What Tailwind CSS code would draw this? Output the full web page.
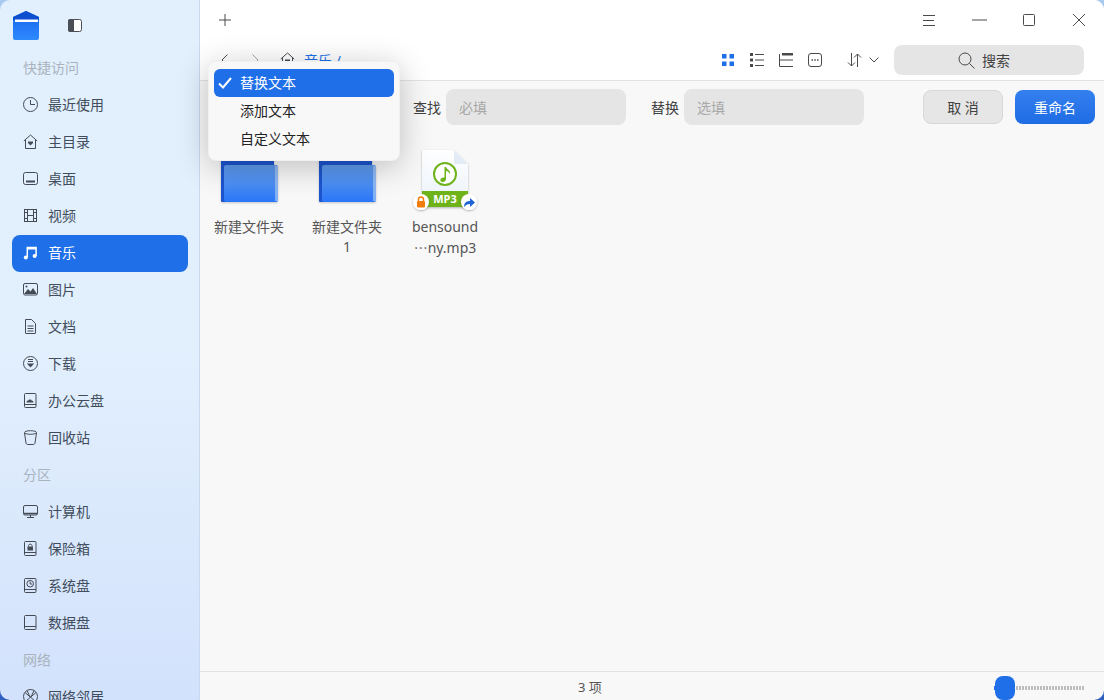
<!DOCTYPE html>
<html lang="zh-CN">
<head>
<meta charset="UTF-8">
<title>文件管理器</title>
<script src="https://cdn.jsdelivr.net/npm/@tailwindcss/browser@4"></script>
</head>
<body class="w-[1104px] h-[700px] overflow-hidden bg-gradient-to-b from-[#a9c9ef] to-[#2f5fc0] font-['Noto_Sans','Noto_Sans_CJK_SC',sans-serif] text-[14px]">
<div class="relative flex w-[1104px] h-[700px] overflow-hidden rounded-[10px]">

  <!-- sidebar -->
  <aside class="w-[200px] h-[700px] shrink-0 overflow-hidden border-r border-[#c9d9ee] bg-gradient-to-b from-[#e2f0fd] via-[#e2effd] to-[#d3e2fc] text-[#414d5c] flex flex-col">
    <div class="h-[50px] shrink-0 flex items-start pl-[12px] pt-[10px]">
      <svg width="28" height="30" viewBox="0 0 28 30">
        <defs><linearGradient id="lg" x1="0" y1="0" x2="0" y2="1"><stop offset="0" stop-color="#1463ea"/><stop offset="1" stop-color="#2f8aff"/></linearGradient></defs>
        <path d="M1 7 14 1l13 6v21a2 2 0 0 1-2 2H3a2 2 0 0 1-2-2z" fill="url(#lg)"/>
        <path d="M1 7 14 1l13 6v3H1z" fill="#0d4fcf"/>
        <path d="M3 9.500h23v2.500H3z" fill="#fff"/>
      </svg>
      <svg class="ml-[28px] mt-[9px]" width="14" height="13" viewBox="0 0 14 13"><rect x=".5" y=".5" width="13" height="12" rx="2" fill="#fff" stroke="#4a4f57"/><path d="M2 0h4v13H2a2 2 0 0 1-2-2V2a2 2 0 0 1 2-2z" fill="#4a4f57"/></svg>
    </div>
    <div class="h-[37px] shrink-0 flex items-center pb-[2px] pl-[23px] text-[#a9b3bd]">快捷访问</div>
    <div class="h-[37px] shrink-0 flex items-center pb-[2px] pl-[23px] gap-[10px]">
      <svg width="15" height="15" viewBox="0 0 15 15" fill="none" stroke="#454b54"><circle cx="7.500" cy="7.500" r="7"/><path d="M7.500 3v4.500H12"/></svg>最近使用</div>
    <div class="h-[37px] shrink-0 flex items-center pb-[2px] pl-[23px] gap-[10px]">
      <svg width="15" height="15" viewBox="0 0 15 15" fill="none" stroke="#454b54"><path d="M.8 7 7.500 1l6.700 6M2.500 6v8.500h10V6"/><path d="M5 7.500h5v1.500l-2.500 2.500L5 9z" fill="#454b54" stroke="none"/></svg>主目录</div>
    <div class="h-[37px] shrink-0 flex items-center pb-[2px] pl-[23px] gap-[10px]">
      <svg width="15" height="15" viewBox="0 0 15 15" fill="none" stroke="#454b54"><rect x=".5" y="1.500" width="14" height="12" rx="2"/><path d="M3 10.500h9" stroke-width="2"/></svg>桌面</div>
    <div class="h-[37px] shrink-0 flex items-center pb-[2px] pl-[23px] gap-[10px]">
      <svg width="15" height="15" viewBox="0 0 15 15" fill="none" stroke="#454b54"><rect x="1.500" y="1.500" width="12" height="12"/><path d="M4.500 1.500v12M10.500 1.500v12M4.500 7.500h6M1.500 4.500h3M1.500 10.500h3M10.500 4.500h3M10.500 10.500h3"/></svg>视频</div>
    <div class="h-[37px] shrink-0 ml-[12px] mr-[11px] rounded-[8px] bg-[#1f6fe8] text-white flex items-center pb-[2px] pl-[11px] gap-[10px]">
      <svg width="15" height="15" viewBox="0 0 15 15" fill="none" stroke="#fff" stroke-width="1.500"><path d="M4.300 12.500V2.500h8.800v8.500"/><path d="M4.300 2h8.800v2.500H4.300z" fill="#fff" stroke="none"/><circle cx="2.800" cy="12.500" r="2" fill="#fff" stroke="none"/><circle cx="11.600" cy="11" r="2" fill="#fff" stroke="none"/></svg>音乐</div>
    <div class="h-[37px] shrink-0 flex items-center pb-[2px] pl-[23px] gap-[10px]">
      <svg width="15" height="15" viewBox="0 0 15 15" fill="none" stroke="#454b54"><rect x=".5" y="1.500" width="14" height="11.500" rx="1.500"/><path d="m1 12 4-5 2.500 2.500L10 6l4 6z" fill="#454b54" stroke="none"/><circle cx="3.500" cy="4.500" r="1" fill="#454b54" stroke="none"/></svg>图片</div>
    <div class="h-[37px] shrink-0 flex items-center pb-[2px] pl-[23px] gap-[10px]">
      <svg width="15" height="15" viewBox="0 0 15 15" fill="none" stroke="#454b54"><path d="M2.500.5h6l4 4v9.500a.5.5 0 0 1-.5.500H3a.5.5 0 0 1-.5-.5z"/><path d="M4.500 7h6M4.500 9.500h6M4.500 12h6"/></svg>文档</div>
    <div class="h-[37px] shrink-0 flex items-center pb-[2px] pl-[23px] gap-[10px]">
      <svg width="15" height="15" viewBox="0 0 15 15" fill="none" stroke="#454b54"><circle cx="7.500" cy="7.500" r="7"/><path d="M5 3.500h5M5 5.500h5"/><path d="M3.800 7.500h7.400l-3.700 4z" fill="#454b54" stroke="none"/></svg>下载</div>
    <div class="h-[37px] shrink-0 flex items-center pb-[2px] pl-[23px] gap-[10px]">
      <svg width="15" height="15" viewBox="0 0 15 15" fill="none" stroke="#454b54"><rect x="1.500" y=".5" width="11.500" height="14" rx="1"/><path d="M1.500 11.500h11.500"/><path d="M3.500 9.500c0-1.500 1-2 1.800-2 .4-1.500 3-1.500 3.400 0 1 0 1.800.7 1.800 2z" fill="#454b54" stroke="none"/></svg>办公云盘</div>
    <div class="h-[37px] shrink-0 flex items-center pb-[2px] pl-[23px] gap-[10px]">
      <svg width="15" height="15" viewBox="0 0 15 15" fill="none" stroke="#454b54"><ellipse cx="7.500" cy="2.500" rx="6" ry="1.800"/><path d="m1.500 3 1.500 10c.2 1 1 1.500 2 1.500h5c1 0 1.800-.5 2-1.500l1.500-10"/></svg>回收站</div>
    <div class="h-[37px] shrink-0 flex items-center pb-[2px] pl-[23px] text-[#a9b3bd]">分区</div>
    <div class="h-[37px] shrink-0 flex items-center pb-[2px] pl-[23px] gap-[10px]">
      <svg width="15" height="15" viewBox="0 0 15 15" fill="none" stroke="#454b54"><rect x=".5" y="1.500" width="14" height="9.500" rx="1.500"/><path d="M.5 9.500h14" stroke-width="1.500"/><path d="M7.500 11v2.500M4 13.500h7"/></svg>计算机</div>
    <div class="h-[37px] shrink-0 flex items-center pb-[2px] pl-[23px] gap-[10px]">
      <svg width="15" height="15" viewBox="0 0 15 15" fill="none" stroke="#454b54"><rect x="1.500" y=".5" width="11.500" height="14" rx="1"/><path d="M1.500 11.500h11.500"/><rect x="4.500" y="5.500" width="5.500" height="4" fill="#454b54" stroke="none"/><path d="M5.500 5.500V4.500a1.800 1.800 0 0 1 3.500 0v1"/></svg>保险箱</div>
    <div class="h-[37px] shrink-0 flex items-center pb-[2px] pl-[23px] gap-[10px]">
      <svg width="15" height="15" viewBox="0 0 15 15" fill="none" stroke="#454b54"><rect x="1.500" y=".5" width="11.500" height="14" rx="1"/><path d="M1.500 11.500h11.500"/><circle cx="7.200" cy="5.700" r="3.300"/><path d="M7.200 3.500v2.500h2" /></svg>系统盘</div>
    <div class="h-[37px] shrink-0 flex items-center pb-[2px] pl-[23px] gap-[10px]">
      <svg width="15" height="15" viewBox="0 0 15 15" fill="none" stroke="#454b54"><rect x="1.500" y=".5" width="11.500" height="14" rx="1"/><path d="M1.500 11.500h11.500"/></svg>数据盘</div>
    <div class="h-[37px] shrink-0 flex items-center pb-[2px] pl-[23px] text-[#a9b3bd]">网络</div>
    <div class="h-[37px] shrink-0 flex items-center pb-[2px] pl-[23px] gap-[10px]">
      <svg width="15" height="15" viewBox="0 0 15 15" fill="none" stroke="#454b54"><circle cx="7.500" cy="7.500" r="7"/><path d="M2 3.500 12 12M13 3.500 3 12M4 1.500 7 8M11 1.500 8 8"/></svg>网络邻居</div>
  </aside>

  <!-- main -->
  <main class="flex-1 flex flex-col bg-[#f8f8f8] text-[#414141]">
    <header class="h-[81px] shrink-0 bg-white border-b border-[#e3e3e3] flex flex-col">
      <div class="h-[40px] flex items-center">
        <svg class="ml-[19px]" width="12" height="12" viewBox="0 0 12 12" stroke="#4a4a4a"><path d="M6 0v12M0 6h12"/></svg>
        <div class="ml-auto flex items-center">
          <svg width="12" height="11" viewBox="0 0 12 11" stroke="#4a4a4a"><path d="M0 .5h12M0 5.500h11M0 10.500h12"/></svg>
          <svg class="ml-[37px]" width="15" height="2" viewBox="0 0 15 2" stroke="#4a4a4a"><path d="M0 1h15"/></svg>
          <svg class="ml-[36px]" width="12" height="12" viewBox="0 0 12 12" fill="none" stroke="#4a4a4a"><rect x=".5" y=".5" width="11" height="11" rx="1"/></svg>
          <svg class="ml-[38px] mr-[19px]" width="12" height="12" viewBox="0 0 12 12" stroke="#4a4a4a"><path d="m0 0 12 12M12 0 0 12"/></svg>
        </div>
      </div>
      <div class="h-[40px] flex items-center">
        <svg class="ml-[21px]" width="8" height="12" viewBox="0 0 8 12" fill="none" stroke="#4a4a4a"><path d="M6.500.5 1 6l5.500 5.500"/></svg>
        <svg class="ml-[22px]" width="8" height="12" viewBox="0 0 8 12" fill="none" stroke="#a8a8a8"><path d="M1.500.5 7 6l-5.500 5.500"/></svg>
        <svg class="ml-[21px] -mt-[2px]" width="15" height="15" viewBox="0 0 15 15" fill="none" stroke="#454b54"><path d="M.8 7 7.500 1l6.700 6M2.500 6v8.500h10V6"/><path d="M5 7.500h5v1.500l-2.500 2.500L5 9z" fill="#454b54" stroke="none"/></svg>
        <span class="ml-[9px] text-[#1f6fe8]">音乐 /</span>
        <div class="ml-auto flex items-center">
          <svg width="12" height="12" viewBox="0 0 12 12" fill="#1f6fe8"><rect width="4.500" height="4.500"/><rect x="7.500" width="4.500" height="4.500"/><rect y="7.500" width="4.500" height="4.500"/><rect x="7.500" y="7.500" width="4.500" height="4.500"/></svg>
          <svg class="ml-[16px]" width="14" height="14" viewBox="0 0 14 14" fill="#4a4a4a"><rect width="3" height="3"/><rect y="5.500" width="3" height="3"/><rect y="11" width="3" height="3"/><path d="M5 1h9v1H5zM5 6.500h9v1H5zM5 12h9v1H5z"/></svg>
          <svg class="ml-[15px]" width="14" height="14" viewBox="0 0 14 14" fill="none" stroke="#4a4a4a"><path d="M.5 1v12.500H14M.5 7H14"/><path d="M3 0h11v2.500H3z" fill="#4a4a4a" stroke="none"/></svg>
          <svg class="ml-[15px]" width="14" height="14" viewBox="0 0 14 14" fill="none" stroke="#4a4a4a"><rect x=".5" y=".5" width="13" height="13" rx="2.500"/><path d="M3.500 7h1.500M6.300 7h1.500M9 7h1.500" stroke-width="1.500"/></svg>
          <svg class="ml-[25px]" width="15" height="14" viewBox="0 0 15 14" fill="none" stroke="#4a4a4a"><path d="M4.500 0v13M1 9.500 4.500 13 8 9.500M10.500 14V1M7 4.500 10.500 1 14 4.500"/></svg>
          <svg class="ml-[7px]" width="10" height="6" viewBox="0 0 10 6" fill="none" stroke="#4a4a4a"><path d="m.5.5 4.500 4.500L9.500.5"/></svg>
          <div class="ml-[15px] mr-[20px] w-[190px] h-[30px] rounded-[8px] bg-[#e5e5e5] flex items-center pl-[64px] gap-[7px] text-[#414141]">
            <svg width="17" height="17" viewBox="0 0 17 17" fill="none" stroke="#4a4a4a"><circle cx="7" cy="7" r="6"/><path d="m11.500 11.500 5 5"/></svg>搜索</div>
        </div>
      </div>
    </header>

    <div class="h-[52px] shrink-0 flex items-center">
      <span class="ml-[213px]">查找</span>
      <div class="ml-[5px] w-[180px] h-[36px] rounded-[8px] bg-[#e5e5e5] flex items-center pl-[13px] text-[#a8a8a8]">必填</div>
      <span class="ml-[25px]">替换</span>
      <div class="ml-[5px] w-[180px] h-[36px] rounded-[8px] bg-[#e5e5e5] flex items-center pl-[13px] text-[#a8a8a8]">选填</div>
      <button class="ml-[59px] w-[80px] h-[34px] rounded-[8px] bg-[#e6e6e6] border border-[#d8d8d8]">取 消</button>
      <button class="ml-[12px] w-[80px] h-[34px] rounded-[8px] bg-gradient-to-b from-[#3580ef] to-[#1e6ce4] text-white">重命名</button>
    </div>

    <section class="flex-1 flex items-start pt-[16px]">
      <div class="w-[98px] flex flex-col items-center">
        <svg class="drop-shadow-[0_1px_1px_rgba(0,0,0,0.2)]" width="60" height="60" viewBox="0 0 60 60">
          <defs><linearGradient id="fb" x1="0" y1="0" x2="0" y2="1"><stop offset="0" stop-color="#5f9aec"/><stop offset=".5" stop-color="#4c8ff5"/><stop offset="1" stop-color="#2a76f8"/></linearGradient></defs>
          <path d="M2 4h53v48a1 1 0 0 1-1 1H3a1 1 0 0 1-1-1z" fill="#1d55cf"/>
          <rect x="5" y="16" width="54" height="37" rx="2" fill="url(#fb)"/>
          <rect x="56" y="17" width="3" height="35" fill="#b7d2f5" opacity=".6"/>
        </svg>
        <span class="mt-[8px] text-[#555] leading-[20px]">新建文件夹</span>
      </div>
      <div class="w-[98px] flex flex-col items-center">
        <svg class="drop-shadow-[0_1px_1px_rgba(0,0,0,0.2)]" width="60" height="60" viewBox="0 0 60 60">
          <path d="M2 4h53v48a1 1 0 0 1-1 1H3a1 1 0 0 1-1-1z" fill="#1d55cf"/>
          <rect x="5" y="16" width="54" height="37" rx="2" fill="url(#fb)"/>
          <rect x="56" y="17" width="3" height="35" fill="#b7d2f5" opacity=".6"/>
        </svg>
        <span class="mt-[8px] text-[#555] leading-[20px] text-center">新建文件夹<br>1</span>
      </div>
      <div class="w-[98px] flex flex-col items-center">
        <svg class="overflow-visible" width="60" height="60" viewBox="0 0 60 60">
          <defs>
            <linearGradient id="pg" x1="0" y1="0" x2="0" y2="1"><stop offset="0" stop-color="#ffffff"/><stop offset="1" stop-color="#e9f1fb"/></linearGradient>
            <filter id="sh" x="-30%" y="-30%" width="160%" height="160%"><feDropShadow dx="0" dy="1" stdDeviation="1.200" flood-color="#000" flood-opacity=".28"/></filter>
          </defs>
          <path d="M7 1h32l14 14v43H7z" fill="url(#pg)" filter="url(#sh)"/>
          <path d="M39 1v14h14z" fill="#e3ebf5"/>
          <circle cx="30" cy="25" r="11" fill="#fff" stroke="#6fb31a" stroke-width="2"/>
          <path d="M29.500 18h1.500c.5 2.500 5 3 4 7-1-2-2.500-2.800-4-3v8c0 1.800-1.500 3-3.200 3-1.500 0-2.500-.8-2.500-2 0-1.500 1.500-2.600 3.200-2.600.4 0 .7 0 1 .1z" fill="#6fb31a"/>
          <rect x="7" y="42" width="46" height="16" fill="#6fb31a"/>
          <text x="30" y="54" text-anchor="middle" font-size="11" font-weight="700" fill="#fff">MP3</text>
          <circle cx="6" cy="53" r="8" fill="#fff" filter="url(#sh)"/>
          <rect x="2" y="52" width="8" height="6.500" rx="1" fill="#f47c0d"/>
          <path d="M3.500 52v-1.500a2.500 2.500 0 0 1 5 0V52" fill="none" stroke="#f47c0d" stroke-width="1.500"/>
          <circle cx="54" cy="53" r="8" fill="#fff" filter="url(#sh)"/>
          <path d="M49 58c0-4 2-6 6-6v-3l5 4.500-5 4.500v-3c-3 0-4 1-6 3z" fill="#1d64d8"/>
        </svg>
        <span class="mt-[8px] text-[#555] leading-[20px] text-center">bensound<br><span class="font-['Noto_Sans_CJK_SC']">…</span>ny.mp3</span>
      </div>
    </section>

    <footer class="h-[29px] shrink-0 border-t border-[#e3e3e3] flex items-center pt-[3px]">
      <span class="ml-[378px] text-[13px] text-[#555]">3 项</span>
      <div class="relative ml-auto mr-[19px] w-[90px] h-[4px] [background:repeating-linear-gradient(90deg,#bdbdbd_0,#bdbdbd_2px,transparent_2px,transparent_3px)]">
        <div class="absolute -left-[1px] top-0 w-[4px] h-[4px] bg-[#1f6fe8]"></div>
        <div class="absolute left-0 -top-[10px] w-[20px] h-[24px] rounded-[8px] bg-[#1f6fe8]"></div>
      </div>
    </footer>
  </main>

  <!-- popup menu -->
  <div class="absolute left-[208px] top-[61px] w-[192px] h-[100px] rounded-[8px] bg-[#f8f8f8] border border-black/[0.03] shadow-[0_6px_32px_rgba(0,0,0,0.24)] px-[5px] pt-[7px] text-[#222]">
    <div class="h-[28px] rounded-[6px] bg-[#1f6fe8] text-white flex items-center pb-[2px]">
      <svg class="ml-[4px] mt-[2px]" width="14" height="12" viewBox="0 0 14 12" fill="none" stroke="#fff" stroke-width="2"><path d="m1 6.500 4 4 8-9.500"/></svg>
      <span class="ml-[8px]">替换文本</span>
    </div>
    <div class="h-[28px] flex items-center pb-[2px] pl-[26px]">添加文本</div>
    <div class="h-[28px] flex items-center pb-[2px] pl-[26px]">自定义文本</div>
  </div>
</div>
</body>
</html>
